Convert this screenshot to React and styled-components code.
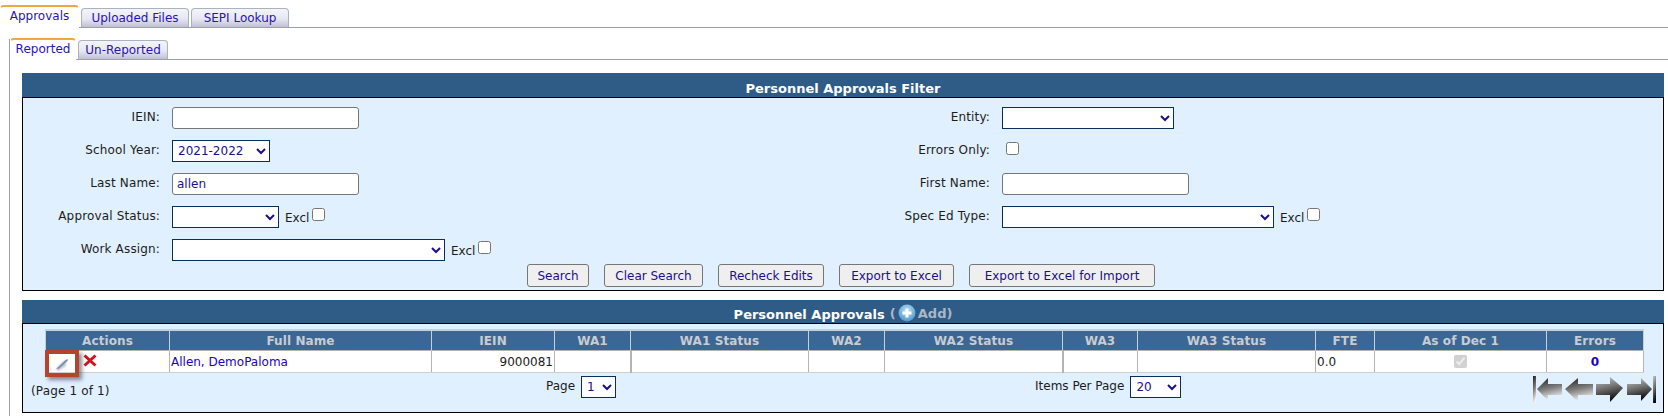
import React from "react";
import styled, { createGlobalStyle } from "styled-components";

const Global = createGlobalStyle`
  html, body { margin: 0; padding: 0; background: #fff; }
  body { font-family: "DejaVu Sans", Verdana, sans-serif; font-size: 12px; color: #1c1c1c; overflow: hidden; }
`;

const Page = styled.div`width: 1668px; height: 416px; overflow: hidden;`;

const TabBar = styled.div`
  display: flex; align-items: flex-end; gap: ${p => p.$gap || 2}px;
  height: ${p => p.$h}px; margin-top: ${p => p.$top}px;
  border-bottom: 1px solid #a0a0a0; box-sizing: border-box;
`;
const Tab = styled.div`
  box-sizing: border-box;
  width: ${p => p.$w}px;
  height: ${p => (p.$active ? p.$h + 2 : p.$h)}px;
  margin-bottom: ${p => (p.$active ? -1 : 0)}px;
  display: flex; align-items: center; justify-content: center;
  padding-bottom: ${p => (p.$active ? 3 : 1)}px;
  color: #2a13b8; font-size: 12px;
  border-radius: 4px 4px 0 0;
  border: 1px solid ${p => (p.$active ? "#fff" : "#a9b2bd")};
  border-bottom: none;
  border-top: ${p => (p.$active ? "2px solid #f0a83c" : "1px solid #a9b2bd")};
  background: ${p => (p.$active ? "#fff" : "linear-gradient(#f4f5fa 0%, #e6e7f1 55%, #bfc0d6 100%)")};
`;

const SubPanel = styled.div`
  margin: 11px 0 0 9px; height: 378px;
  border-left: 1px solid #a0a0a0;
`;
const Content = styled.div`padding: 13px 4px 0 12px;`;

const Header = styled.div`
  height: ${p => p.$h}px; box-sizing: border-box;
  background: #2f5b87; color: #fff; font-weight: 700; font-size: 13px;
  display: flex; align-items: flex-end; justify-content: center; padding-bottom: 1px;
`;
const Muted = styled.span`color: #a9b7c6; margin-left: 5px; display: inline-flex; align-items: center; gap: 2px;`;

const Panel = styled.div`
  background: #e1f0ff; border: 1px solid #000; margin-bottom: 9px;
`;
const FilterGrid = styled.div`
  display: grid; grid-template-columns: 137px 669px 137px 1fr;
  column-gap: 12px; row-gap: 12px; grid-auto-rows: 21px; align-items: center;
  padding-top: 9px;
`;
const Label = styled.label`text-align: right; white-space: nowrap; position: relative; top: -1px; letter-spacing: 0.15px;`;
const Field = styled.div`display: flex; align-items: center; gap: 5px; height: 21px;`;
const Text = styled.input`
  box-sizing: border-box; width: 187px; height: 22px; font: 12px "DejaVu Sans", sans-serif;
  color: #1a0f8f; border: 1px solid #767676; border-radius: 3px; background: #fff; padding: 0 4px; margin: 0;
`;
const Select = styled.select`
  box-sizing: border-box; width: ${p => p.$w}px; height: 22px; font: 12px "DejaVu Sans", sans-serif;
  color: #1a0f8f; border: 1px solid #0a2f5f; border-radius: 0; background-color: #fff; margin: 0; padding: 0 0 0 1px;
`;
const Check = styled.input.attrs({ type: "checkbox" })`
  width: 13px; height: 13px; margin: 0 0 4px ${p => p.$ml || 0}px; flex: none;
`;
const Excl = styled.span`margin-top: 2px; margin-left: 1px; margin-right: -2px;`;

const Buttons = styled.div`
  display: flex; gap: 15px; margin: 4px 0 0 504px; padding-bottom: 3px;
`;
const Btn = styled.button`
  box-sizing: border-box; width: ${p => p.$w}px; height: 23px; padding: 0; margin: 0;
  font: 12px "DejaVu Sans", sans-serif; color: #1a0f8f;
  background: #efefef; border: 1px solid #767676; border-radius: 3px;
`;

const TableWrap = styled.div`padding: 5px 0 0 22px;`;
const Table = styled.table`
  border-collapse: collapse; table-layout: fixed; width: 1598px; background: #fff;
`;
const Th = styled.th`
  height: 19px; padding: 0; background: #3b6797; color: #c9ccd0; font-size: 12px; font-weight: 700;
  text-align: center; border: 1px solid #c6d0da; border-top: 2px solid #c6d0da; border-bottom: none;
  letter-spacing: 0.1px;
`;
const Td = styled.td`
  height: 22px; padding: 0 1px; font-size: 12px; color: ${p => (p.$link ? "#2200cc" : "#1c1c1c")};
  text-align: ${p => p.$align || "left"}; font-weight: ${p => (p.$bold ? 700 : 400)};
  border: 1px solid #b4b4b4; border-bottom: 1px solid #cfcfcf; border-right-width: ${p => (p.$thick ? 2 : 1)}px;
  position: relative; box-sizing: border-box;
`;
const ActionCell = styled.div`display: flex; align-items: center; height: 22px; padding-left: 36px; margin-top: -3px;`;
const Callout = styled.div`
  position: absolute; left: -1px; top: -1px; width: 34px; height: 27px; box-sizing: border-box;
  border: 4px solid #b5432e; box-shadow: 3px 3px 4px rgba(60,70,80,0.6);
  display: flex; align-items: center; justify-content: center;
`;
const Pager = styled.div`
  display: grid; grid-template-columns: 515px 489px 498px auto; padding: 3px 0 10px 8px; height: 26px;
`;
const PageNote = styled.div`padding-top: 8px; letter-spacing: 0.15px;`;
const PageCtl = styled.div`display: flex; align-items: flex-start; gap: 6px; line-height: 21px;`;
const Nav = styled.div`display: flex; gap: 1px;`;

const Pencil = () => (
  <svg width="18" height="16" viewBox="0 0 18 16">
    <defs><filter id="pb"><feGaussianBlur stdDeviation="1.2" /></filter></defs>
    <path d="M3 13 L12 4 L13 10 L5 15 Z" fill="#8a8f98" opacity=".55" filter="url(#pb)" />
    <path d="M3.5 12.5 L12 4.5 L14 3 L15 4 L13.5 6 L5 13.5 Z" fill="#7d8db8" />
    <path d="M3 13 L4.5 11.5 L5.5 13 Z" fill="#c9a3a8" />
  </svg>
);
const Cross = () => (
  <svg width="14" height="13" viewBox="0 0 14 13">
    <path d="M1.5 1.5 L12.5 11.5 M12.5 1.5 L1.5 11.5" stroke="#d2121c" strokeWidth="3" />
  </svg>
);
const Plus = () => (
  <svg width="18" height="18" viewBox="0 0 18 18">
    <defs><radialGradient id="pl" cx="50%" cy="35%" r="65%"><stop offset="0" stopColor="#bfe3f7" /><stop offset="1" stopColor="#4b97cc" /></radialGradient></defs>
    <circle cx="9" cy="9" r="8.5" fill="url(#pl)" />
    <path d="M9 4.5 V13.5 M4.5 9 H13.5" stroke="#fff" strokeWidth="3" />
  </svg>
);
const Arrow = ({ kind, id }) => {
  const left = kind === "first" || kind === "prev";
  const bar = kind === "first" || kind === "last";
  const shape = left
    ? (bar ? "M4 13 L15 2 V8 H29 V19 H15 V25 Z" : "M1 13 L14 2 V8 H29 V19 H14 V26 Z")
    : (bar ? "M1 8 H15 V2 L26 13 L15 25 V19 H1 Z" : "M1 8 H15 V1 L28 12 L15 26 V19 H1 Z");
  return (
    <svg width="30" height="27" viewBox="0 0 30 27">
      <defs>
        <linearGradient id={id} x1="0" y1="0" x2="0.25" y2="1">
          {left ? (<><stop offset="0" stopColor="#1c1c1c" /><stop offset=".55" stopColor="#808080" /><stop offset="1" stopColor="#f0f0f0" /></>)
                : (<><stop offset="0" stopColor="#c8c8c8" /><stop offset=".5" stopColor="#707070" /><stop offset="1" stopColor="#0c0c0c" /></>)}
        </linearGradient>
      </defs>
      {bar && <rect x={left ? 0 : 27} y="0" width="3" height="27" fill={`url(#${id})`} />}
      <path d={shape} fill={`url(#${id})`} />
    </svg>
  );
};

const cols = [124, 262, 123, 76, 178, 76, 178, 75, 178, 59, 172, 97];
const heads = ["Actions", "Full Name", "IEIN", "WA1", "WA1 Status", "WA2", "WA2 Status", "WA3", "WA3 Status", "FTE", "As of Dec 1", "Errors"];

export default function App() {
  return (
    <Page>
      <Global />
      <TabBar $h={22} $top={6}>
        <Tab $active $w={79} $h={21}>Approvals</Tab>
        <Tab $w={108} $h={19}>Uploaded Files</Tab>
        <Tab $w={98} $h={19}>SEPI Lookup</Tab>
      </TabBar>
      <SubPanel>
        <TabBar $h={21} $top={0}>
          <Tab $active $w={66} $h={20}>Reported</Tab>
          <Tab $w={90} $h={19}>Un-Reported</Tab>
        </TabBar>
        <Content>
          <Header $h={24}>Personnel Approvals Filter</Header>
          <Panel>
            <FilterGrid>
              <Label>IEIN:</Label><Field><Text /></Field>
              <Label>Entity:</Label><Field><Select $w={172} /></Field>
              <Label>School Year:</Label><Field><Select $w={98}><option>2021-2022</option></Select></Field>
              <Label>Errors Only:</Label><Field><Check $ml={4} /></Field>
              <Label>Last Name:</Label><Field><Text defaultValue="allen" /></Field>
              <Label>First Name:</Label><Field><Text /></Field>
              <Label>Approval Status:</Label><Field><Select $w={107} /><Excl>Excl</Excl><Check /></Field>
              <Label>Spec Ed Type:</Label><Field><Select $w={272} /><Excl>Excl</Excl><Check /></Field>
              <Label>Work Assign:</Label><Field><Select $w={273} /><Excl>Excl</Excl><Check /></Field>
            </FilterGrid>
            <Buttons>
              <Btn $w={62}>Search</Btn>
              <Btn $w={99}>Clear Search</Btn>
              <Btn $w={106}>Recheck Edits</Btn>
              <Btn $w={115}>Export to Excel</Btn>
              <Btn $w={186}>Export to Excel for Import</Btn>
            </Buttons>
          </Panel>
          <Header $h={23}>Personnel Approvals<Muted>( <Plus /> Add)</Muted></Header>
          <Panel>
            <TableWrap>
              <Table>
                <colgroup>{cols.map((w, i) => <col key={i} width={w} />)}</colgroup>
                <thead><tr>{heads.map(h => <Th key={h}>{h}</Th>)}</tr></thead>
                <tbody>
                  <tr>
                    <Td>
                      <Callout><Pencil /></Callout>
                      <ActionCell><Cross /></ActionCell>
                    </Td>
                    <Td $link>Allen, DemoPaloma</Td>
                    <Td $align="right">9000081</Td>
                    <Td $thick /><Td /><Td /><Td $thick /><Td /><Td />
                    <Td>0.0</Td>
                    <Td $align="center"><Check disabled defaultChecked style={{ margin: "3px 0 0" }} /></Td>
                    <Td $align="center" $link $bold>0</Td>
                  </tr>
                </tbody>
              </Table>
            </TableWrap>
            <Pager>
              <PageNote>(Page 1 of 1)</PageNote>
              <PageCtl>Page <Select $w={35}><option>1</option></Select></PageCtl>
              <PageCtl>Items Per Page <Select $w={51}><option>20</option></Select></PageCtl>
              <Nav>
                <Arrow kind="first" id="a1" /><Arrow kind="prev" id="a2" /><Arrow kind="next" id="a3" /><Arrow kind="last" id="a4" />
              </Nav>
            </Pager>
          </Panel>
        </Content>
      </SubPanel>
    </Page>
  );
}
